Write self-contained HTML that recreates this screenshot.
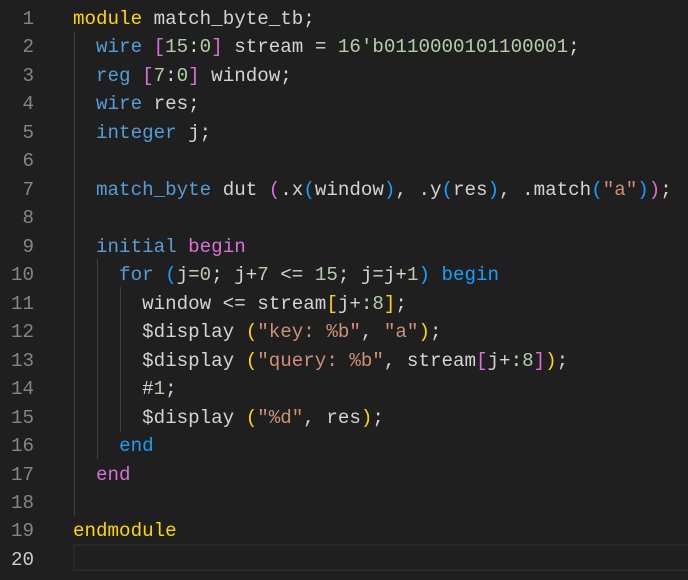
<!DOCTYPE html>
<html><head><meta charset="utf-8"><style>
html,body{margin:0;padding:0;background:#1f1f1f;width:688px;height:580px;overflow:hidden}
.ed{position:absolute;left:0;top:5px;font-family:"Liberation Mono",monospace;font-size:19.2px;line-height:28.47px;color:#d4d4d4;white-space:pre}
.ln{position:absolute;left:0;top:0;width:34px;text-align:right;color:#858585}
.ln .a{color:#cccccc}
.code{position:absolute;left:73px;top:0}
.g{position:absolute;width:1px;background:#404040}
.k{color:#569cd6}.y{color:#ffd700}.m{color:#da70d6}.b{color:#179fff}.n{color:#b5cea8}.s{color:#ce9178}.p{color:#da70d6}
.cur{position:absolute;left:73px;right:0;top:544px;height:27px;border:2px solid #282828;border-right:none;box-sizing:border-box}
</style></head><body>
<div class="cur"></div>
<div class="g" style="left:74px;top:31px;height:485px"></div>
<div class="g" style="left:97px;top:259px;height:200px"></div>
<div class="g" style="left:120px;top:287px;height:145px"></div>
<div class="ed"><div class="ln">1
2
3
4
5
6
7
8
9
10
11
12
13
14
15
16
17
18
19
<span class="a">20</span></div><div class="code"><span class="y">module</span> match_byte_tb;
  <span class="k">wire</span> <span class="m">[</span><span class="n">15</span>:<span class="n">0</span><span class="m">]</span> stream = <span class="n">16'b0110000101100001</span>;
  <span class="k">reg</span> <span class="m">[</span><span class="n">7</span>:<span class="n">0</span><span class="m">]</span> window;
  <span class="k">wire</span> res;
  <span class="k">integer</span> j;

  <span class="k">match_byte</span> dut <span class="m">(</span>.x<span class="b">(</span>window<span class="b">)</span>, .y<span class="b">(</span>res<span class="b">)</span>, .match<span class="b">(</span><span class="s">"a"</span><span class="b">)</span><span class="m">)</span>;

  <span class="k">initial</span> <span class="p">begin</span>
    <span class="k">for</span> <span class="b">(</span>j=<span class="n">0</span>; j+<span class="n">7</span> &lt;= <span class="n">15</span>; j=j+<span class="n">1</span><span class="b">)</span> <span class="b">begin</span>
      window &lt;= stream<span class="y">[</span>j+:<span class="n">8</span><span class="y">]</span>;
      $display <span class="y">(</span><span class="s">"key: %b"</span>, <span class="s">"a"</span><span class="y">)</span>;
      $display <span class="y">(</span><span class="s">"query: %b"</span>, stream<span class="m">[</span>j+:<span class="n">8</span><span class="m">]</span><span class="y">)</span>;
      #<span class="n">1</span>;
      $display <span class="y">(</span><span class="s">"%d"</span>, res<span class="y">)</span>;
    <span class="b">end</span>
  <span class="p">end</span>

<span class="y">endmodule</span></div></div>
</body></html>
